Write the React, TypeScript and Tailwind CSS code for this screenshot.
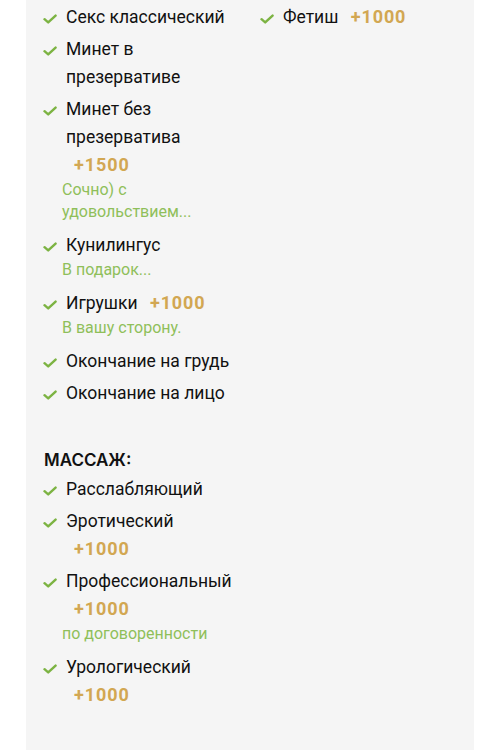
import React from 'react';

type Service = {
  name: string;
  price?: string;
  note?: string;
};

const sexLeft: Service[] = [
  { name: 'Секс классический' },
  { name: 'Минет в презервативе' },
  { name: 'Минет без презерватива', price: '+1500', note: 'Сочно) с удовольствием...' },
  { name: 'Кунилингус', note: 'В подарок...' },
  { name: 'Игрушки', price: '+1000', note: 'В вашу сторону.' },
  { name: 'Окончание на грудь' },
  { name: 'Окончание на лицо' },
];

const sexRight: Service[] = [{ name: 'Фетиш', price: '+1000' }];

const massage: Service[] = [
  { name: 'Расслабляющий' },
  { name: 'Эротический', price: '+1000' },
  { name: 'Профессиональный', price: '+1000', note: 'по договоренности' },
  { name: 'Урологический', price: '+1000' },
];

function Check() {
  return (
    <svg viewBox="0 0 14 10" className="mt-[11px] h-[10px] w-[14px] shrink-0" aria-hidden>
      <path
        d="M1.5 5.2 L5.2 8.4 L12.6 1.6"
        fill="none"
        stroke="#7cb342"
        strokeWidth="2.4"
        strokeLinecap="round"
        strokeLinejoin="round"
      />
    </svg>
  );
}

function ServiceItem({ service }: Readonly<{ service: Service }>) {
  return (
    <li className="mb-1">
      <div className="flex gap-[9px]">
        <Check />
        <span className="text-[17.5px] leading-[28px] text-[#111]">
          {service.name}
          {service.price && (
            <>
              {' '}
              <span className="ml-2 text-[18px] font-bold tracking-[0.05em] text-[#d2a752]">
                {service.price}
              </span>
            </>
          )}
        </span>
      </div>
      {service.note && (
        <p className="mb-2 ml-[19px] w-[170px] text-[16px] leading-[22px] text-[#8fbf5a]">
          {service.note}
        </p>
      )}
    </li>
  );
}

function ServiceList({ items }: Readonly<{ items: Service[] }>) {
  return (
    <ul className="pr-[26px]">
      {items.map((s) => (
        <ServiceItem key={s.name} service={s} />
      ))}
    </ul>
  );
}

export default function App() {
  return (
    <div className="min-h-[750px] bg-white" style={{ fontFamily: 'Roboto, "Noto Sans", sans-serif' }}>
      <div className="mx-[26px] min-h-[750px] bg-[#f5f5f5] px-[17px] pt-[3px] pb-[40px]">
        <div className="grid grid-cols-[217px_1fr]">
          <ServiceList items={sexLeft} />
          <ServiceList items={sexRight} />
        </div>

        <h3
          className="mt-[38px] mb-[4px] pl-px text-[17px] font-semibold leading-[22px] text-[#111]"
          style={{ fontFamily: 'Inter, sans-serif' }}
        >
          МАССАЖ:
        </h3>
        <div className="grid grid-cols-[217px_1fr]">
          <ServiceList items={massage} />
        </div>
      </div>
    </div>
  );
}
